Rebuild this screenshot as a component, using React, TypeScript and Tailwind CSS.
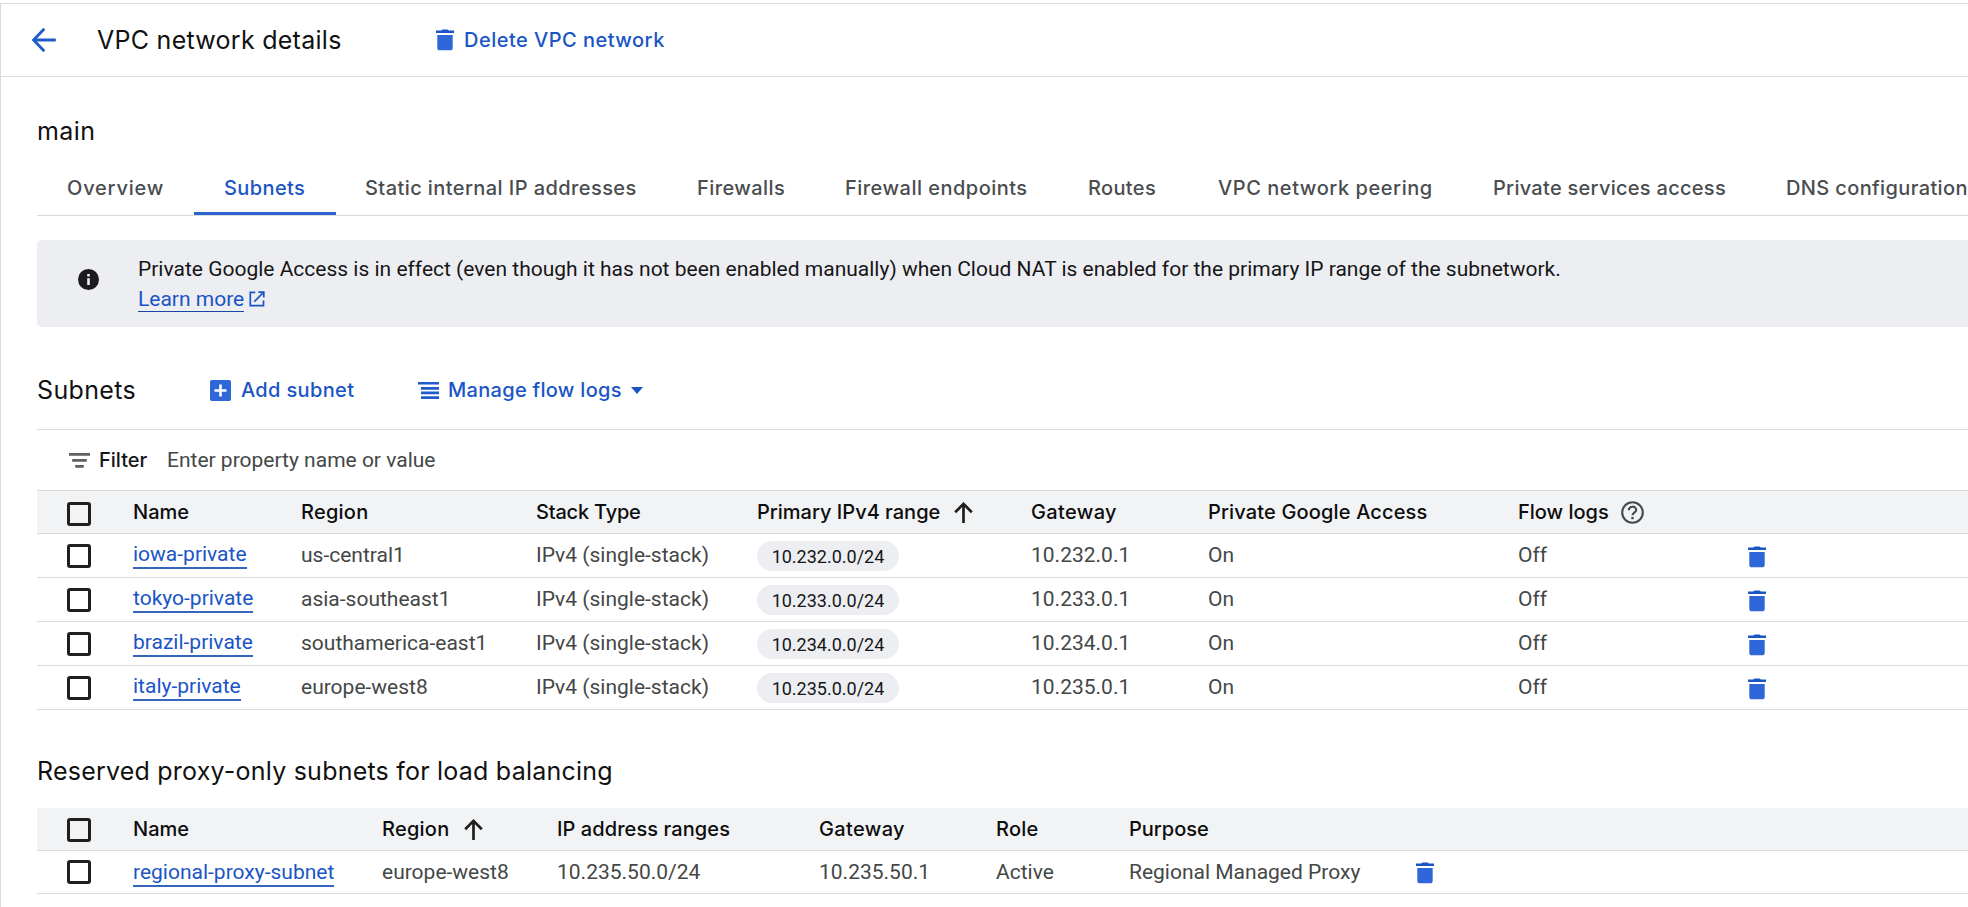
import React from "react";

const TrashIcon = () => (
  <svg className="shrink-0" width="18" height="22" viewBox="0 0 18 22">
    <path d="M5.2 1.6Q6 .4 7 .4h4q1 0 1.800 1.200H18V4H0V1.600z" fill="#1b55c4" />
    <path d="M1.300 6h15.400v12.700q0 2.600-2.600 2.600H3.900q-2.600 0-2.600-2.600z" fill="#2f67d8" />
  </svg>
);

const BackIcon = () => (
  <svg className="shrink-0" width="26" height="26" viewBox="0 0 26 26" fill="none" stroke="#1d5bcb" strokeWidth="2.800">
    <path d="M13.300 1.800 2.600 13l10.700 11.200M3 13h21.800" />
  </svg>
);

const SortIcon = () => (
  <svg className="shrink-0" width="19" height="21" viewBox="0 0 19 21" fill="none" stroke="#1f1f1f" strokeWidth="2.700">
    <path d="M9.500 21V2.500M1.200 10.200l8.300-8.300 8.300 8.300" />
  </svg>
);

const InfoIcon = () => (
  <svg className="shrink-0" width="21" height="21" viewBox="0 0 21 21">
    <circle cx="10.500" cy="10.500" r="10.500" fill="#1b1b1f" />
    <path d="M9.200 9.300h2.600v6.700H9.200zM9.200 5h2.600v2.500H9.200z" fill="#edeef2" />
  </svg>
);

const ExternalIcon = () => (
  <svg className="mt-[7px] shrink-0" width="16" height="16" viewBox="0 0 16 16" fill="none" stroke="#1a55c6" strokeWidth="1.700">
    <path d="M6.300 1.400H1.300v13.200h13.200V9.600M9.300 1.100h5.500v5.500M14.500 1.400 5.300 10.600" />
  </svg>
);

const AddIcon = () => (
  <svg className="shrink-0" width="21" height="21" viewBox="0 0 21 21">
    <rect width="21" height="21" rx="1.800" fill="#2f67d8" />
    <path d="M9.200 4.500h2.600v4.700h4.700v2.600h-4.700v4.700H9.200v-4.700H4.500V9.200h4.700z" fill="#fff" />
  </svg>
);

const LogsIcon = () => (
  <svg className="shrink-0" width="21" height="17" viewBox="0 0 21 17" fill="#1f5bcc">
    <path d="M0 0h21v2.500H0zM3 5h18v2.700H3zM3 9.600h18v2.600H3zM3 14.300h18V17H3z" />
  </svg>
);

const FilterIcon = () => (
  <svg className="shrink-0" width="21" height="15" viewBox="0 0 21 15" fill="#5f6062">
    <path d="M0 0h21v2.800H0zM3.200 6h14.600v2.800H3.200zM6.200 12h8.600v2.800H6.200z" />
  </svg>
);

const HelpIcon = () => (
  <svg className="shrink-0" width="23" height="23" viewBox="0 0 23 23" fill="none" stroke="#46484b" strokeWidth="2.100">
    <circle cx="11.500" cy="11.500" r="10.300" />
    <path d="M7.900 9.200c0-4.700 7.300-4.600 7.300-.3 0 2.600-3.700 2.800-3.700 5.300" />
    <path d="M10.300 15.900h2.400v2.300h-2.400z" fill="#46484b" stroke="none" />
  </svg>
);

const Checkbox = () => <span className="block size-6 shrink-0 rounded-[3px] border-[3px] border-[#1f1f1f]" />;

const headText = "font-['Inter',sans-serif] text-[20px] font-medium text-[#0d0d0e]";

const tabs = [
  { label: "Overview", size: "w-[157px] tracking-[0.800px]" },
  { label: "Subnets", size: "w-[142px] tracking-[0.400px]", active: true },
  { label: "Static internal IP addresses", size: "-ml-px w-[332px] tracking-[0.420px]" },
  { label: "Firewalls", size: "w-[148px] tracking-[0.420px]" },
  { label: "Firewall endpoints", size: "w-[243px] tracking-[0.480px]" },
  { label: "Routes", size: "w-[130px] tracking-[0.350px]" },
  { label: "VPC network peering", size: "w-[275px] tracking-[0.560px]" },
  { label: "Private services access", size: "w-[293px] tracking-[0.280px]" },
  { label: "DNS configuration", size: "w-[260px] tracking-[0.370px]" },
];

const subnets = [
  { name: "iowa-private", region: "us-central1", octet: 232 },
  { name: "tokyo-private", region: "asia-southeast1", octet: 233 },
  { name: "brazil-private", region: "southamerica-east1", octet: 234 },
  { name: "italy-private", region: "europe-west8", octet: 235 },
];

const subnetGrid = "grid grid-cols-[66px_168px_235px_221px_274px_177px_310px_230px_1fr] items-center pl-[30px]";
const proxyGrid = "grid grid-cols-[66px_249px_175px_262px_177px_133px_287px_1fr] items-center pl-[30px]";

const NameLink = ({ children }: { children: string }) => (
  <a className="inline-block h-[27px] border-b-2 border-[#3565bd] leading-[25px] text-[#1a55c6]">{children}</a>
);

export default function App() {
  return (
    <div className="h-[907px] w-full overflow-hidden bg-white pt-[3px] font-['Roboto',sans-serif] text-[21px] text-[#444746]">
      <div className="h-full border-t border-l border-[#dadbde]">
        <header className="flex h-[73px] items-center border-b border-[#dadbde] pl-[30px]">
          <BackIcon />
          <h1 className="ml-10 w-[339px] font-['Inter',sans-serif] text-[25px] leading-[30px] tracking-[0.270px] whitespace-nowrap text-[#111]">
            VPC network details
          </h1>
          <button className="flex items-center gap-[10px] font-['Inter',sans-serif] text-[20px] font-medium tracking-[0.480px] text-[#1a55c6]">
            <TrashIcon />
            Delete VPC network
          </button>
        </header>

        <main className="pl-9">
          <h2 className="mt-[39px] h-[30px] font-['Inter',sans-serif] text-[25px] leading-[30px] tracking-[0.400px] text-[#111]">
            main
          </h2>

          <nav className="mt-4 flex h-[54px] overflow-hidden border-b border-[#dadbde]">
            {tabs.map((tab) => (
              <a
                key={tab.label}
                className={`flex h-[53px] shrink-0 items-center border-b-[3px] pt-[2px] pl-[30px] font-['Inter',sans-serif] text-[20px] font-medium whitespace-nowrap ${tab.size} ${
                  tab.active ? "border-[#2a62cf] text-[#1a55c6]" : "border-transparent text-[#4a4d50]"
                }`}
              >
                {tab.label}
              </a>
            ))}
          </nav>

          <section className="mt-6 flex h-[87px] rounded-l-[5px] bg-[#edeef2] pl-[41px] text-[#161618]">
            <div className="mt-[29px] w-[60px]">
              <InfoIcon />
            </div>
            <div className="mt-[14px] leading-[30px] whitespace-nowrap">
              <p>
                Private Google Access is in effect (even though it has not been enabled manually) when Cloud NAT is enabled
                for the primary IP range of the subnetwork.
              </p>
              <p className="flex items-start gap-[5px]">
                <a className="h-[28px] border-b border-[#1a45a0] text-[#1a55c6]">Learn more</a>
                <ExternalIcon />
              </p>
            </div>
          </section>

          <div className="flex h-[103px] items-center border-b border-[#dadbde] pt-6">
            <h2 className="w-[173px] font-['Inter',sans-serif] text-[25px] leading-[30px] tracking-[0.350px] text-[#111]">
              Subnets
            </h2>
            <button className="flex w-[208px] items-center gap-[10px] font-['Inter',sans-serif] text-[20px] font-medium tracking-[0.350px] text-[#1a55c6]">
              <AddIcon />
              Add subnet
            </button>
            <button className="flex items-center gap-[9px] font-['Inter',sans-serif] text-[20px] font-medium tracking-[0.300px] text-[#1a55c6]">
              <LogsIcon />
              Manage flow logs
              <svg width="12" height="7" viewBox="0 0 12 7" fill="#1a55c6">
                <path d="M0 0h12L6 7z" />
              </svg>
            </button>
          </div>

          <div className="flex h-[60px] items-center pl-8">
            <FilterIcon />
            <span className="ml-[9px] w-[68px] font-['Inter',sans-serif] text-[20px] font-medium text-[#161618]">Filter</span>
            <span className="pt-[2px]">Enter property name or value</span>
          </div>

          <section>
            <div className={`${subnetGrid} ${headText} h-[44px] border-y border-[#dadbde] bg-[#f1f3f4]`}>
              <span className="pt-[3px]">
                <Checkbox />
              </span>
              <span>Name</span>
              <span className="tracking-[0.250px]">Region</span>
              <span className="tracking-[-0.200px]">Stack Type</span>
              <span className="flex items-center gap-[14px]">
                Primary IPv4 range
                <SortIcon />
              </span>
              <span className="tracking-[0.350px]">Gateway</span>
              <span className="tracking-[0.150px]">Private Google Access</span>
              <span className="flex items-center gap-[12px]">
                Flow logs
                <HelpIcon />
              </span>
            </div>
            {subnets.map((s) => (
              <div key={s.name} className={`${subnetGrid} h-[44px] border-b border-[#dadbde]`}>
                <Checkbox />
                <span className="flex">
                  <NameLink>{s.name}</NameLink>
                </span>
                <span>{s.region}</span>
                <span>IPv4 (single-stack)</span>
                <span className="mt-px flex h-[30px] w-[142px] items-center justify-center rounded-full bg-[#edeef2] text-[18px] text-[#161618]">
                  10.{s.octet}.0.0/24
                </span>
                <span>10.{s.octet}.0.1</span>
                <span>On</span>
                <span>Off</span>
                <span className="pt-[2px]">
                  <TrashIcon />
                </span>
              </div>
            ))}
          </section>

          <h2 className="mt-[46px] h-[30px] font-['Inter',sans-serif] text-[25px] leading-[30px] tracking-[0.220px] text-[#111]">
            Reserved proxy-only subnets for load balancing
          </h2>

          <section className="mt-[22px]">
            <div className={`${proxyGrid} ${headText} h-[43px] border-b border-[#dadbde] bg-[#f1f3f4]`}>
              <span className="pt-[2px]">
                <Checkbox />
              </span>
              <span>Name</span>
              <span className="flex items-center gap-[15px] tracking-[0.250px]">
                Region
                <SortIcon />
              </span>
              <span className="tracking-[0.080px]">IP address ranges</span>
              <span className="tracking-[0.350px]">Gateway</span>
              <span className="tracking-[0.200px]">Role</span>
              <span>Purpose</span>
            </div>
            <div className={`${proxyGrid} h-[43px] border-b border-[#dadbde] pt-[2px]`}>
              <span className="-mt-[2px]">
                <Checkbox />
              </span>
              <span className="flex">
                <NameLink>regional-proxy-subnet</NameLink>
              </span>
              <span>europe-west8</span>
              <span>10.235.50.0/24</span>
              <span>10.235.50.1</span>
              <span>Active</span>
              <span>Regional Managed Proxy</span>
              <span>
                <TrashIcon />
              </span>
            </div>
          </section>
        </main>
      </div>
    </div>
  );
}
